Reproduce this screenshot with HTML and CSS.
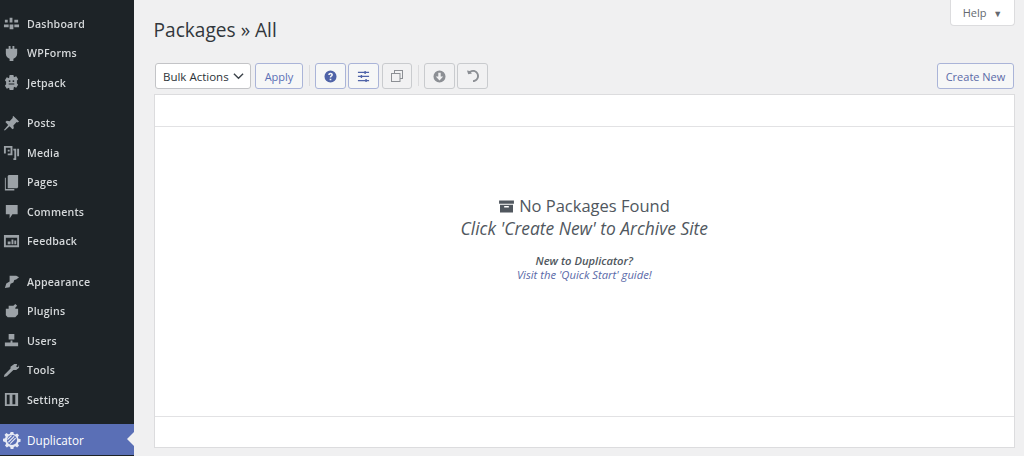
FILE: index.html
```html
<!DOCTYPE html>
<html lang="en">

<head>
    <meta charset="UTF-8">
    <meta name="viewport" content="width=device-width, initial-scale=1.0">
    <title>Packages - Duplicator</title>
    <link rel="stylesheet" href="styles.css">
</head>

<body>
    <div class="page">

        <!-- Admin Menu -->
        <nav class="sidebar">
            <ul class="menu-group">
                <li class="menu-item">
                    <svg class="menu-icon" viewBox="0 0 18 18"><path d="M2 5h3v3H2zM7 3h3v5H7zM12 5h4v3h-4zM1 10h5v3H1zM7 10h4v5H7zM12 10h5v3h-5z"/></svg>
                    <span class="menu-label">Dashboard</span>
                </li>
                <li class="menu-item">
                    <svg class="menu-icon" viewBox="0 0 18 18"><path d="M6 1h2v3h2V1h2v3h3v5c0 3-2 5-4 5.500V17H7v-2.500C5 14 3 12 3 9V4h3z"/></svg>
                    <span class="menu-label">WPForms</span>
                </li>
                <li class="menu-item">
                    <svg class="menu-icon" viewBox="0 0 18 18"><path fill-rule="evenodd" d="M7 1h4l.600 2.500 2.400-1 2 3-1.500 2 .5 1-.5 1 1.500 2-2 3-2.400-1L11 17H7l-.600-2.500-2.400 1-2-3 1.500-2-.5-1 .5-1-1.500-2 2-3 2.400 1zM6 7.500a1 1 0 1 0 2 0 1 1 0 1 0-2 0zM10 7.500a1 1 0 1 0 2 0 1 1 0 1 0-2 0zM6 11h6V10H6z"/></svg>
                    <span class="menu-label">Jetpack</span>
                </li>
            </ul>
            <ul class="menu-group">
                <li class="menu-item">
                    <svg class="menu-icon" viewBox="0 0 18 18"><path d="M11 1l6 6-1.500 1-1-.5L11 11l.5 3-1.500 1-3-3-5 4.500L1 16l4.500-5.500-3-3L4 6l3 .5L10.500 3l-.5-1z"/></svg>
                    <span class="menu-label">Posts</span>
                </li>
                <li class="menu-item">
                    <svg class="menu-icon" viewBox="0 0 18 18"><path fill-rule="evenodd" d="M1 2h9v10H5v-2h3V4H3v6H1zM11 5h3v12h-3v-2h1V7h-1zM15 5h2v8h-2zM5 6h2v2H5z"/></svg>
                    <span class="menu-label">Media</span>
                </li>
                <li class="menu-item">
                    <svg class="menu-icon" viewBox="0 0 18 18"><path d="M6 1h10v13l-1 1H5V2zM3 4v12h9v1.500H2V4z"/></svg>
                    <span class="menu-label">Pages</span>
                </li>
                <li class="menu-item">
                    <svg class="menu-icon" viewBox="0 0 18 18"><path d="M3 2h12.500v10H10l-3 4.500V12H3z"/></svg>
                    <span class="menu-label">Comments</span>
                </li>
                <li class="menu-item">
                    <svg class="menu-icon" viewBox="0 0 18 18"><path fill-rule="evenodd" d="M1 2h16v13H1zM3 5v8h12V5zM5 9h3v3H5zM9 7h2v5H9zM12 8h2v4h-2z"/></svg>
                    <span class="menu-label">Feedback</span>
                </li>
            </ul>
            <ul class="menu-group">
                <li class="menu-item">
                    <svg class="menu-icon" viewBox="0 0 18 18"><path d="M7 3h7l3 1.500L14 7l-2 .5-1 2.500-3 1.500-1 3.500-5 1 1.500-5L7 9z"/></svg>
                    <span class="menu-label">Appearance</span>
                </li>
                <li class="menu-item">
                    <svg class="menu-icon" viewBox="0 0 18 18"><path d="M6 3h5l2-2 2 2-2 2v1h3v6l-3 3H5l-2-2V6h3z"/></svg>
                    <span class="menu-label">Plugins</span>
                </li>
                <li class="menu-item">
                    <svg class="menu-icon" viewBox="0 0 18 18"><path d="M6 2h6v6H6zM8 9h2v2h6v4H2v-4h6z"/></svg>
                    <span class="menu-label">Users</span>
                </li>
                <li class="menu-item">
                    <svg class="menu-icon" viewBox="0 0 18 18"><path d="M12 2h3l-1 3 2 .5L17 3v3l-3 2.500h-3L4 15l-3 1 .5-2.500L8 7V5z"/></svg>
                    <span class="menu-label">Tools</span>
                </li>
                <li class="menu-item">
                    <svg class="menu-icon" viewBox="0 0 18 18"><path fill-rule="evenodd" d="M2 2h14v14H2zM4 4v10h3V4zM10 4v10h3V4z"/></svg>
                    <span class="menu-label">Settings</span>
                </li>
            </ul>
            <div class="menu-item menu-item-active">
                <svg class="active-icon" viewBox="0 0 20 20">
                    <path d="M8.500 1h3l.5 2.300 1.700.7 2-1.300 2.100 2.100-1.300 2 .7 1.700 2.300.5v3l-2.300.5-.7 1.700 1.300 2-2.100 2.100-2-1.300-1.700.7-.5 2.300h-3l-.5-2.300-1.700-.7-2 1.300-2.100-2.100 1.300-2-.7-1.700L0 11.500v-3l2.300-.5.7-1.700-1.300-2 2.100-2.100 2 1.300L7.500 3.300z"/>
                    <circle class="active-hole" cx="10" cy="10" r="5.600"/>
                    <path class="active-slash" d="M6 12.500L12.500 6M8 14l6-6M5 9.500L9.500 5"/>
                </svg>
                <span>Duplicator</span>
                <i class="active-arrow"></i>
            </div>
        </nav>

        <!-- Packages Screen -->
        <main class="content">
            <div class="top-row">
                <h1>Packages » All</h1>
                <div class="help-tab">Help <span class="help-arrow">▼</span></div>
            </div>

            <div class="toolbar">
                <div class="select-box">Bulk Actions
                    <svg class="select-arrow" viewBox="0 0 12 8"><path d="M1 1.500l5 5 5-5"/></svg>
                </div>
                <button class="btn btn-text">Apply</button>
                <span class="divider"></span>
                <button class="btn btn-icon btn-on">
                    <svg viewBox="0 0 14 14"><path fill-rule="evenodd" d="M7 .5a6.500 6.500 0 1 0 0 13 6.500 6.500 0 0 0 0-13zM6.100 9.300h1.800v1.700H6.100zM4.500 5.300C4.600 3.900 5.600 3 7.100 3c1.500 0 2.500.9 2.500 2.100 0 1-.5 1.500-1.200 2-.5.3-.6.500-.6 1H6.200c0-1 .3-1.500 1-2 .5-.3.7-.5.7-.9 0-.4-.3-.7-.8-.7s-.8.3-.9.800z"/></svg>
                </button>
                <button class="btn btn-icon btn-on">
                    <svg viewBox="0 0 14 14"><path d="M1 2h12v1.300H1zM1 6.300h12v1.300H1zM1 10.700h12V12H1zM8 1h1.500v3.300H8zM4 5.300h1.500v3.300H4zM9 9.700h1.500V13H9z"/></svg>
                </button>
                <button class="btn btn-icon btn-off">
                    <svg class="icon-wide" viewBox="0 0 14 14"><path fill-rule="evenodd" d="M4 1h9v9h-2.500v3H1V4h3zM5 2v2h5.500v5H12V2zM2 5v7h7.500V5z"/></svg>
                </button>
                <span class="divider"></span>
                <button class="btn btn-icon btn-off">
                    <svg viewBox="0 0 14 14"><path fill-rule="evenodd" d="M7 .5a6.500 6.500 0 1 0 0 13 6.500 6.500 0 0 0 0-13zM5.700 3h2.600v4H11l-4 4.200L3 7h2.700z"/></svg>
                </button>
                <button class="btn btn-icon btn-off">
                    <svg class="icon-wide" viewBox="0 0 14 14"><path d="M1 1.500l1.200 3.800 3.800-.9-1.100-1C5.500 3 6.200 2.800 7 2.800c2.300 0 4.100 1.900 4.100 4.200S9.300 11.200 7 11.200v1.800c3.300 0 6-2.700 6-6s-2.700-6-6-6c-1.200 0-2.300.3-3.200 1z"/></svg>
                </button>
                <button class="btn btn-text btn-create">Create New</button>
            </div>

            <section class="panel">
                <div class="panel-bar"></div>
                <div class="panel-body">
                    <h2 class="empty-title">
                        <svg class="box-icon" viewBox="0 0 16 14"><path fill-rule="evenodd" d="M0 .5h16V4H0zM1 5h14v8.500H1zM5.500 6.500v1.500h5V6.500z"/></svg>
                        No Packages Found
                    </h2>
                    <p class="empty-sub">Click 'Create New' to Archive Site</p>
                    <p class="empty-new">New to Duplicator?</p>
                    <a class="empty-link" href="#">Visit the 'Quick Start' guide!</a>
                </div>
                <div class="panel-bar panel-bar-bottom"></div>
            </section>
        </main>
    </div>
</body>

</html>
```

FILE: styles.css
```css
* {
    box-sizing: border-box;
}

html,
body {
    height: 100%;
}

body {
    margin: 0;
    overflow: hidden;
    font-family: "Open Sans", "Noto Sans", sans-serif;
    background-color: #f0f0f1;
    color: #3c434a;
}

.page {
    display: flex;
    height: 456px;
}

/* Admin Menu */
.sidebar {
    width: 134px;
    flex-shrink: 0;
    padding-top: 9px;
    background-color: #1d2327;
}

.menu-group {
    list-style: none;
    margin: 0 0 10.5px;
    padding: 0;
}

.menu-group:nth-child(3) {
    margin-bottom: 9.6px;
}

.menu-item {
    display: flex;
    align-items: center;
    height: 29.6px;
    padding-left: 3px;
    font-size: 10.6px;
    color: #d5d8da;
}

.menu-icon {
    width: 17px;
    height: 17px;
    margin-right: 7px;
    fill: #9ca2a7;
}

.menu-label {
    font-weight: 600;
    letter-spacing: .2px;
    filter: blur(.6px);
}

.menu-item-active {
    position: relative;
    height: 31px;
    font-size: 11.7px;
    color: #fff;
    background-color: #5a6fb6;
}

.active-icon {
    width: 18px;
    height: 18px;
    margin-right: 6px;
    fill: #e6e9f4;
}

.active-hole {
    fill: #5a6fb6;
}

.active-slash {
    fill: none;
    stroke: #e6e9f4;
    stroke-width: 1.300;
}

.active-arrow {
    position: absolute;
    right: 0;
    top: 8px;
    border: 7.500px solid transparent;
    border-left-width: 0;
    border-right-color: #f0f0f1;
}

/* Packages Screen */
.content {
    flex: 1;
    padding: 0 9px 8px 19.6px;
    display: flex;
    flex-direction: column;
}

.top-row {
    display: flex;
    justify-content: space-between;
    align-items: flex-start;
    height: 63px;
}

h1 {
    margin: 16px 0 0;
    font-size: 19.1px;
    font-weight: 400;
    line-height: 28px;
    color: #32373c;
}

.help-tab {
    width: 65px;
    height: 26px;
    font-size: 11px;
    line-height: 25px;
    text-align: center;
    color: #646970;
    background-color: #fff;
    border: 1px solid #dcdcde;
    border-top: none;
    border-radius: 0 0 4px 4px;
}

.help-arrow {
    margin-left: 4px;
    font-size: 9px;
}

.toolbar {
    display: flex;
    align-items: flex-start;
    height: 31px;
    padding: 0 1px 0 1.4px;
}

.select-box {
    display: flex;
    align-items: center;
    justify-content: space-between;
    width: 96px;
    height: 26px;
    margin-right: 4px;
    padding: 0 6px 0 7px;
    font-size: 11.5px;
    color: #2c3338;
    background-color: #fff;
    border: 1px solid #c3c4c7;
    border-radius: 3px;
}

.select-arrow {
    width: 11px;
    height: 8px;
    fill: none;
    stroke: #3c434a;
    stroke-width: 1.500;
}

.btn {
    height: 26px;
    padding: 0;
    font-family: inherit;
    border-radius: 3px;
    background-color: #f6f7f7;
}

.btn-text {
    width: 48px;
    font-size: 11px;
    color: #5a6fb6;
    border: 1px solid #aab4d8;
}

.btn-create {
    width: 77px;
    margin-left: auto;
    color: #5a6aa8;
}

.btn-icon {
    display: flex;
    align-items: center;
    justify-content: center;
    width: 30.6px;
}

.btn-icon + .btn-icon {
    margin-left: 2.7px;
}

.btn-icon svg {
    width: 13px;
    height: 13px;
}

.btn-icon .icon-wide {
    width: 14px;
    height: 14px;
}

.btn-on {
    border: 1px solid #aab4d8;
}

.btn-on svg {
    fill: #4f63a8;
}

.btn-off {
    border: 1px solid #c9cbce;
    background-color: #f1f1f2;
}

.btn-off svg {
    fill: #8c8f94;
}

.divider {
    width: 1px;
    height: 21px;
    margin: 2px 5px 0 6px;
    background-color: #dcdcde;
}

.panel {
    flex: 1;
    display: flex;
    flex-direction: column;
    background-color: #fff;
    border: 1px solid #dcdcde;
}

.panel-bar {
    height: 31px;
    flex-shrink: 0;
}

.panel-bar-bottom {
    height: 30px;
}

.panel-body {
    flex: 1;
    text-align: center;
    padding-top: 68px;
    border-top: 1px solid #e2e2e4;
    border-bottom: 1px solid #e2e2e4;
}

.empty-title {
    margin: 0;
    font-size: 16.5px;
    font-weight: 400;
    line-height: 22px;
    color: #50575e;
}

.box-icon {
    width: 15px;
    height: 13px;
    margin-right: 1px;
    vertical-align: -1px;
    fill: #50575e;
}

.empty-sub {
    margin: 0;
    font-size: 17.4px;
    font-style: italic;
    line-height: 22px;
    color: #50575e;
}

.empty-new {
    margin: 15px 0 0;
    font-size: 11.2px;
    font-style: italic;
    font-weight: 600;
    line-height: 14px;
    color: #50575e;
}

.empty-link {
    display: block;
    font-size: 11.25px;
    font-style: italic;
    line-height: 13px;
    color: #5a6aa8;
    text-decoration: none;
}
```
